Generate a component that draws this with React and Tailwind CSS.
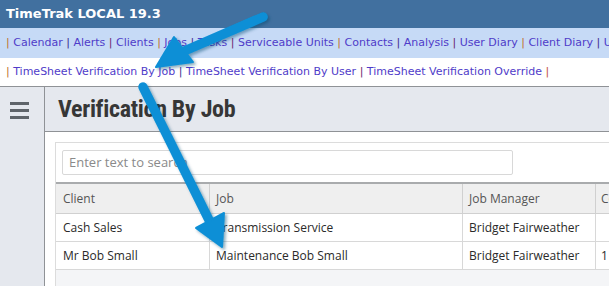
const navTop = [
  'Calendar',
  'Alerts',
  'Clients',
  'Jobs',
  'Tasks',
  'Serviceable Units',
  'Contacts',
  'Analysis',
  'User Diary',
  'Client Diary',
  'User Timesheets',
];

const navSub = [
  'TimeSheet Verification By Job',
  'TimeSheet Verification By User',
  'TimeSheet Verification Override',
];

const sepColors = ['text-[#c0702f]', 'text-[#3b2f8f]', 'text-[#6b1f6f]'];

const rows = [
  { client: 'Cash Sales', job: 'Transmission Service', manager: 'Bridget Fairweather', extra: '' },
  { client: 'Mr Bob Small', job: 'Maintenance Bob Small', manager: 'Bridget Fairweather', extra: '1' },
];

function NavLinks({ items }) {
  return (
    <>
      {items.map((item, i) => (
        <span key={item} className="whitespace-pre">
          <span className={sepColors[i % 3]}>|</span>
          {' '}
          <span className="text-[#4f3cc9]">{item}</span>
          {' '}
        </span>
      ))}
      <span className="text-[#c0502f]">|</span>
    </>
  );
}

function Arrows() {
  return (
    <svg className="absolute inset-0 pointer-events-none" width="609" height="286" viewBox="0 0 609 286">
      <defs>
        <filter id="sh" x="-20%" y="-20%" width="140%" height="140%">
          <feDropShadow dx="2" dy="2" stdDeviation="1.5" floodColor="#0b4a72" floodOpacity="0.45" />
        </filter>
      </defs>
      <g filter="url(#sh)" fill="#0b8fd6" stroke="#0b8fd6">
        <line x1="263" y1="17" x2="182" y2="52" strokeWidth="9.5" strokeLinecap="round" />
        <polygon points="156,67 174,37 193,62" strokeWidth="2" strokeLinejoin="round" />
        <line x1="143" y1="87" x2="210" y2="222" strokeWidth="9.5" strokeLinecap="round" />
        <polygon points="222,247 196,228 224,213" strokeWidth="2" strokeLinejoin="round" />
      </g>
    </svg>
  );
}

export default function App() {
  return (
    <div className="relative w-[609px] h-[286px] overflow-hidden bg-white">
      {/* header bar */}
      <div className="h-[28px] bg-[#41709f] px-[6px] flex items-center">
        <span className="text-white font-bold text-[13px] font-['DejaVu_Sans',sans-serif]">TimeTrak LOCAL 19.3</span>
      </div>

      {/* main nav */}
      <div className="h-[30px] bg-[#c6daf6] px-[6px] flex items-center whitespace-nowrap text-[11px] font-['DejaVu_Sans',sans-serif]">
        <NavLinks items={navTop} />
      </div>

      {/* sub nav */}
      <div className="h-[29px] bg-white border-b border-[#8f9296] px-[6px] flex items-center whitespace-nowrap text-[11px] font-['DejaVu_Sans',sans-serif]">
        <NavLinks items={navSub} />
      </div>

      <div className="flex h-[200px]">
        {/* sidebar */}
        <div className="w-[45px] shrink-0 bg-[#e5e8ee] border-r border-[#8f9296] pt-[15px] pl-[10px]">
          <div className="flex flex-col gap-[4px] w-[19px]">
            <div className="h-[3px] bg-[#5f646a]" />
            <div className="h-[3px] bg-[#5f646a]" />
            <div className="h-[3px] bg-[#5f646a]" />
          </div>
        </div>

        {/* content */}
        <div className="flex-1 min-w-0 flex flex-col">
          <div className="h-[45px] shrink-0 bg-[#e5e8ee] border-b border-[#8f9296] pl-[13px] flex items-center">
            <h1 className="text-[24px] font-bold text-[#363636] font-['Roboto_Condensed','Liberation_Sans_Narrow','DejaVu_Sans_Condensed',sans-serif] tracking-[-0.3px]">
              Verification By Job
            </h1>
          </div>

          <div className="flex-1 pt-[10px] pl-[10px]">
            <div className="h-full border-l border-t border-[#dcdcdc] bg-[#f4f5f7] w-[600px] font-['Open_Sans',sans-serif] text-[12px]">
              <div className="bg-white pt-[7px] pl-[6px] pb-[7px]">
                <div className="w-[451px] h-[25px] border border-[#d8d8d8] rounded-[2px] flex items-center px-[6px] text-[13px] text-[#8a8a8a]">
                  Enter text to search
                </div>
              </div>
              <div className="bg-white border-t-2 border-[#a9abad]">
                <div className="flex h-[30px] bg-[#efefef] border-b border-[#d0d0d0] text-[#555]">
                  <div className="w-[154px] px-[7px] flex items-center border-r border-[#d0d0d0]">Client</div>
                  <div className="w-[253px] px-[6px] flex items-center border-r border-[#d0d0d0]">Job</div>
                  <div className="w-[133px] px-[6px] flex items-center border-r border-[#d0d0d0]">Job Manager</div>
                  <div className="flex-1 px-[5px] flex items-center">Cost</div>
                </div>
                {rows.map((r) => (
                  <div key={r.client} className="flex h-[28px] border-b border-[#d8d8d8] text-[#2a2a2a]">
                    <div className="w-[154px] px-[7px] flex items-center border-r border-[#d8d8d8]">{r.client}</div>
                    <div className="w-[253px] px-[6px] flex items-center border-r border-[#d8d8d8]">{r.job}</div>
                    <div className="w-[133px] px-[6px] flex items-center border-r border-[#d8d8d8]">{r.manager}</div>
                    <div className="flex-1 px-[5px] flex items-center">{r.extra}</div>
                  </div>
                ))}
              </div>
            </div>
          </div>
        </div>
      </div>

      <Arrows />
    </div>
  );
}
